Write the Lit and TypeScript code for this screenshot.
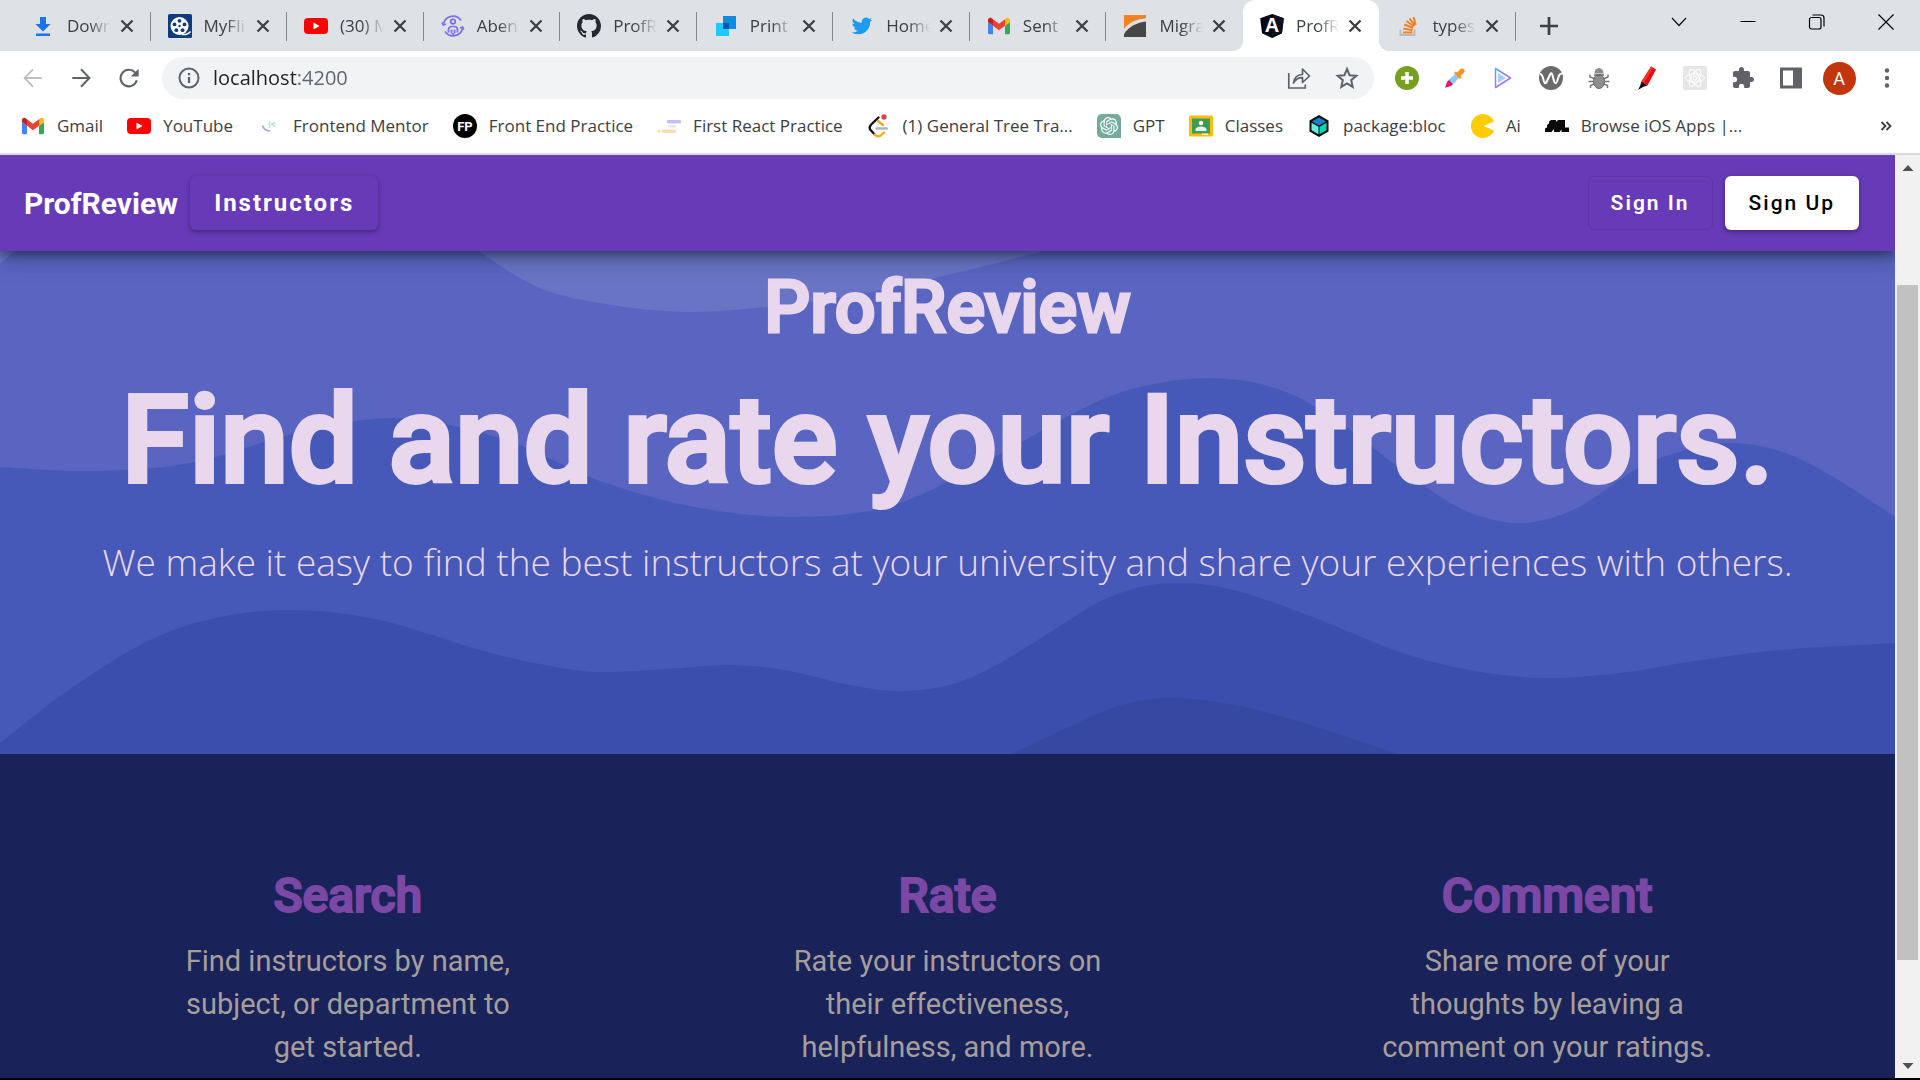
import { LitElement, html, svg, css, nothing } from "lit";
import { customElement, property } from "lit/decorators.js";
import { classMap } from "lit/directives/class-map.js";

type Point = [number, number];

/** Draws a smooth curve through the points (Catmull-Rom turned into cubic segments). */
function curve(points: Point[]): string {
  const n = points.length;
  let d = "";
  for (let i = 0; i < n - 1; i++) {
    const p0 = points[Math.max(0, i - 1)];
    const p1 = points[i];
    const p2 = points[i + 1];
    const p3 = points[Math.min(n - 1, i + 2)];
    const c1 = [p1[0] + (p2[0] - p0[0]) / 6, p1[1] + (p2[1] - p0[1]) / 6];
    const c2 = [p2[0] - (p3[0] - p1[0]) / 6, p2[1] - (p3[1] - p1[1]) / 6];
    d += `C${c1[0].toFixed(1)} ${c1[1].toFixed(1)} ${c2[0].toFixed(1)} ${c2[1].toFixed(1)} ${p2[0]} ${p2[1]}`;
  }
  return d;
}

const crest: Point[] = [[470, -8], [478, 0], [540, 37], [612, 54], [689, 61], [765, 56], [860, 43], [960, 21], [1043, 0], [1070, -8]];
const middle: Point[] = [[0, 216], [92, 220], [190, 212], [290, 184], [392, 167], [500, 187], [600, 230], [700, 257], [796, 266], [890, 255], [980, 214], [1080, 159], [1140, 136], [1211, 127], [1275, 137], [1330, 165], [1400, 217], [1460, 257], [1518, 272], [1575, 258], [1640, 216], [1690, 198], [1731, 192], [1780, 200], [1830, 224], [1895, 266]];
const lower: Point[] = [[0, 492], [70, 438], [150, 389], [220, 366], [294, 359], [380, 369], [480, 399], [540, 413], [597, 421], [665, 418], [732, 414], [790, 420], [850, 434], [906, 440], [965, 429], [1025, 397], [1090, 356], [1130, 339], [1174, 332], [1230, 338], [1310, 365], [1400, 401], [1470, 419], [1542, 427], [1620, 422], [1695, 410], [1780, 399], [1895, 392]];
const base: Point[] = [[1006, 508], [1014, 502], [1082, 470], [1125, 453], [1174, 447], [1240, 455], [1310, 474], [1395, 502], [1408, 508]];

const gmail = svg`<svg viewBox="48 39 96 72">
  <path fill="#4285f4" d="M58 108h14V74L52 59v43c0 3.32 2.69 6 6 6"/><path fill="#34a853" d="M120 108h14c3.32 0 6-2.69 6-6V59l-20 15"/>
  <path fill="#fbbc04" d="M120 48v26l20-15v-8c0-7.42-8.47-11.65-14.4-7.2"/><path fill="#ea4335" d="M72 74V48l24 18 24-18v26L96 92"/>
  <path fill="#c5221f" d="M52 51v8l20 15V48l-5.6-4.2c-5.94-4.45-14.4-.22-14.4 7.2"/></svg>`;
const youtube = svg`<svg viewBox="0 0 24 24"><rect y="4" width="24" height="16" rx="4" fill="#f00"/><path d="M9.5 8.6v6.8l6-3.4z" fill="#fff"/></svg>`;

const icons: Record<string, unknown> = {
  gmail,
  youtube,
  download: svg`<svg viewBox="0 0 24 24"><path d="M9 3h6v7h4.5L12 17.5 4.500 10H9zM5 19.500h14V22H5z" fill="#1a73e8"/></svg>`,
  film: svg`<svg viewBox="0 0 24 24"><rect width="24" height="24" rx="1.500" fill="#0f3c80"/><circle cx="11.500" cy="12" r="9" fill="#fff"/>
    <g fill="#0f3c80"><circle cx="11.500" cy="12" r="1.200"/><circle cx="11.500" cy="6.800" r="1.900"/><circle cx="16.500" cy="10.400" r="1.900"/><circle cx="14.600" cy="16.200" r="1.900"/><circle cx="8.400" cy="16.200" r="1.900"/><circle cx="6.500" cy="10.400" r="1.900"/></g>
    <path d="M14 20.500c3.500.4 6.500-.4 8.500-3" fill="none" stroke="#fff" stroke-width="1.500"/></svg>`,
  people: svg`<svg viewBox="0 0 24 24" fill="none" stroke="#7c6cf0" stroke-width="1.700"><circle cx="12" cy="7.600" r="2.300"/>
    <path d="M7.500 18.500v-2.700a3.300 3.300 0 0 1 3.300-3.300h2.400a3.300 3.300 0 0 1 3.300 3.300v2.700M10.500 19.500v-4M13.500 19.500v-4M2.500 9.500A9.700 9.700 0 0 1 20 6.500M21.500 14.500A9.700 9.700 0 0 1 4 17.500"/>
    <path d="M1 8.500l1.300 2.500 2.500-1M22.800 15.500l-1.300-2.500-2.500 1M12 19v2.500"/></svg>`,
  github: svg`<svg viewBox="0 0 16 16"><path fill="#24292f" d="M8 0C3.58 0 0 3.58 0 8c0 3.540 2.290 6.530 5.470 7.590.4.070.55-.17.55-.38 0-.19-.01-.82-.01-1.490-2.010.37-2.530-.49-2.690-.94-.09-.23-.48-.94-.82-1.130-.28-.15-.68-.52-.01-.53.63-.01 1.080.58 1.230.82.72 1.210 1.870.87 2.330.66.070-.52.28-.87.51-1.070-1.780-.2-3.640-.89-3.640-3.950 0-.87.31-1.590.82-2.150-.08-.2-.36-1.020.08-2.120 0 0 .67-.21 2.200.82.64-.18 1.320-.27 2-.27.68 0 1.360.09 2 .27 1.530-1.040 2.200-.82 2.200-.82.44 1.100.16 1.920.08 2.120.51.56.82 1.270.82 2.150 0 3.070-1.870 3.750-3.650 3.950.29.25.54.73.54 1.480 0 1.070-.01 1.930-.01 2.200 0 .21.15.46.55.38A8.013 8.013 0 0016 8c0-4.420-3.580-8-8-8z"/></svg>`,
  squares: svg`<svg viewBox="0 0 24 24"><rect x="2" y="9" width="13" height="13" fill="#1fc8ff"/><rect x="9" y="2" width="13" height="13" fill="#0d8be0"/><rect x="9" y="9" width="6" height="6" fill="#0b58ad"/></svg>`,
  twitter: svg`<svg viewBox="-2 -1 28 26"><path fill="#1d9bf0" d="M23.953 4.570a10 10 0 01-2.825.775 4.958 4.958 0 002.163-2.723c-.951.555-2.005.959-3.127 1.184a4.920 4.920 0 00-8.384 4.482C7.690 8.095 4.067 6.130 1.640 3.162a4.822 4.822 0 00-.666 2.475c0 1.710.870 3.213 2.188 4.096a4.904 4.904 0 01-2.228-.616v.060a4.923 4.923 0 003.946 4.827 4.996 4.996 0 01-2.212.085 4.936 4.936 0 004.604 3.417 9.867 9.867 0 01-6.102 2.105c-.390 0-.779-.023-1.170-.067a13.995 13.995 0 007.557 2.209c9.053 0 13.998-7.496 13.998-13.985 0-.210 0-.420-.015-.630A9.935 9.935 0 0024 4.590z"/></svg>`,
  road: svg`<svg viewBox="0 0 24 24"><path d="M1 1h22v3.500C14 5 6 8 1 15z" fill="#f58220"/><path d="M1 23v-3C6 12.500 14 8.500 23 7.500V23z" fill="#464646"/></svg>`,
  angular: svg`<svg viewBox="0 0 24 24"><path d="M12 0l11.800 4.200-1.800 15L12 24 2 19.200.2 4.200z" fill="#05060f"/><path d="M12 0l11.800 4.200-1.800 15L12 24z" fill="#0d1020"/><text x="12" y="18.300" text-anchor="middle" font-family="Liberation Sans, sans-serif" font-weight="700" font-size="20" fill="#fff">A</text></svg>`,
  stack: svg`<svg viewBox="0 0 24 24" fill="none" stroke-width="2"><path d="M4.500 15.500V21h14v-5.500" stroke="#bcbbbb"/><path d="M7 18.500h9.500M7.200 14.600l9.300 1.700M8.300 10.500l8.700 3.500M10.500 7l7.300 5.500M13.500 4.500l5.500 7.200M17.500 3l2.200 8" stroke="#f48024"/></svg>`,
  mentor: svg`<svg viewBox="0 0 24 24" fill="none" stroke-width="1.700"><path d="M5.500 11.500c1 3.500 3.500 5.300 7.500 5.300" stroke="#a3aadb"/><path d="M12.500 7v7M18 8.500l-3 1.800 3 2" stroke="#b5e3e3"/></svg>`,
  fp: svg`<svg viewBox="0 0 24 24"><circle cx="12" cy="12" r="12"/><text x="12" y="16.500" text-anchor="middle" font-family="Roboto, sans-serif" font-weight="700" font-size="13" fill="#fff">FP</text></svg>`,
  bars: svg`<svg viewBox="0 0 24 24"><rect x="10" y="6" width="14" height="3.500" rx="1" fill="#c9bbfb"/><rect x="11" y="11" width="8" height="2.500" rx="1" fill="#dcece3"/><rect x="5" y="15.500" width="14" height="3.500" rx="1" fill="#fddcae"/><circle cx="2" cy="17.200" r="1.600" fill="#fddcae"/></svg>`,
  leet: svg`<svg viewBox="0 0 24 24" fill="none" stroke-width="2.300" stroke-linecap="round"><path d="M11.500 3.500L4.200 10.500c-1.800 1.900-1.800 4.500 0 6.300l3.300 3.500" stroke="#111"/><path d="M7.500 20.500c2.500 2.500 5 2.500 7.500 0l2-2M11 7l5 4" stroke="#f5a623"/><path d="M9.500 14.500H20" stroke="#b5b5b5"/><circle cx="17" cy="3" r="2.700" fill="#d64545" stroke="none"/></svg>`,
  gpt: svg`<svg viewBox="0 0 24 24"><path d="M5 0h14a5 5 0 0 1 5 5v19H5a5 5 0 0 1-5-5V5a5 5 0 0 1 5-5z" fill="#74aa9c"/><g transform="translate(3 3) scale(.75)"><path fill="#fff" d="M22.282 9.821a5.985 5.985 0 0 0-.516-4.911 6.046 6.046 0 0 0-6.510-2.900A6.065 6.065 0 0 0 4.981 4.182a5.985 5.985 0 0 0-3.998 2.900 6.046 6.046 0 0 0 .743 7.097 5.980 5.980 0 0 0 .511 4.911 6.051 6.051 0 0 0 6.515 2.900A5.985 5.985 0 0 0 13.260 24a6.056 6.056 0 0 0 5.772-4.206 5.989 5.989 0 0 0 3.998-2.900 6.056 6.056 0 0 0-.748-7.073zm-9.022 12.608a4.476 4.476 0 0 1-2.876-1.041l.142-.080 4.778-2.758a.795.795 0 0 0 .393-.681v-6.737l2.020 1.169a.071.071 0 0 1 .038.052v5.583a4.504 4.504 0 0 1-4.495 4.494zm-9.661-4.125a4.471 4.471 0 0 1-.535-3.014l.142.085 4.783 2.758a.771.771 0 0 0 .781 0l5.843-3.369v2.332a.080.080 0 0 1-.033.062L9.740 19.950a4.499 4.499 0 0 1-6.141-1.646zM2.341 7.896a4.485 4.485 0 0 1 2.366-1.973V11.600a.766.766 0 0 0 .388.677l5.814 3.354-2.020 1.169a.076.076 0 0 1-.071 0l-4.830-2.787A4.504 4.504 0 0 1 2.341 7.872zm16.596 3.856L13.104 8.364 15.119 7.200a.076.076 0 0 1 .071 0l4.830 2.791a4.494 4.494 0 0 1-.677 8.104v-5.677a.790.790 0 0 0-.407-.667zm2.011-3.023l-.142-.085-4.774-2.782a.776.776 0 0 0-.785 0L9.409 9.230V6.897a.066.066 0 0 1 .028-.062l4.830-2.787a4.499 4.499 0 0 1 6.680 4.660zM8.307 12.863l-2.020-1.164a.080.080 0 0 1-.038-.057V6.074a4.499 4.499 0 0 1 7.376-3.454l-.142.081L8.704 5.459a.795.795 0 0 0-.393.681zm1.098-2.365l2.602-1.500 2.607 1.500v2.999l-2.597 1.500-2.607-1.500z"/></g></svg>`,
  classes: svg`<svg viewBox="0 0 24 24"><rect y="1.500" width="24" height="21" rx="1.500" fill="#f8bc0c"/><rect x="3" y="4.500" width="18" height="15" fill="#3f9b55"/><circle cx="12" cy="9" r="2.200" fill="#fff"/><path d="M6.500 17v-1.500c0-2 3-3 5.500-3s5.500 1 5.500 3V17z" fill="#e5f3e8"/><path d="M13 19.500h6v1.500h-6z" fill="#fff3c4"/></svg>`,
  bloc: svg`<svg viewBox="0 0 24 24"><path d="M12 1l9.500 5.500v11L12 23l-9.500-5.500v-11z" fill="#0a0f12"/><path d="M12 3.500l7 4-7 4-7-4z" fill="#1583c8"/><path d="M4.500 8.700l7 4v7.600l-7-4z" fill="#63f0dc"/><path d="M19.500 8.700l-7 4v7.600l7-4z" fill="#06d6b4"/></svg>`,
  pac: svg`<svg viewBox="0 0 24 24"><path d="M24 7.500A12 12 0 1 0 24 16.500L13.500 12z" fill="#fc0"/></svg>`,
  mobbin: svg`<svg viewBox="0 0 24 24"><path d="M0 18v-3.500L2 13.500V11l2-1.500V7.500l2-1.500h5v2l2-2h7v7.500h4V18h-7.500v-2.500L14.500 18H9v-3L6.500 18z" fill="#0a0a0a"/></svg>`,

  back: svg`<svg viewBox="0 0 24 24" fill="none" stroke="#bdbfc2" stroke-width="2"><path d="M21.500 12H3M12 2.500L2.800 12l9.200 9.500"/></svg>`,
  forward: svg`<svg viewBox="0 0 24 24" fill="none" stroke="#5f6368" stroke-width="2.200"><path d="M2.500 12H21M12 2.500l9.200 9.500-9.200 9.500"/></svg>`,
  reload: svg`<svg viewBox="0 0 24 24"><path d="M20.500 14.500A9 9 0 1 1 18.500 6" fill="none" stroke="#5f6368" stroke-width="2.300"/><path d="M22.500 2v8.300H14z" fill="#5f6368"/></svg>`,
  info: svg`<svg viewBox="0 0 24 24" fill="none" stroke="#5f6368" stroke-width="2"><circle cx="12" cy="12" r="9.500"/><path d="M12 11v6M12 7v2.200" stroke-width="2.200"/></svg>`,
  share: svg`<svg viewBox="0 0 24 24" fill="none" stroke="#5f6368" stroke-width="1.700" stroke-linejoin="round"><path d="M1.800 7v15h16.500v-3.500M6.500 17c.7-5.500 4-8.300 9-8.500V3l7 7-7 6.500v-4.800C11.500 11.500 8.500 13.500 6.500 17z"/></svg>`,
  star: svg`<svg viewBox="0 0 24 24"><path d="M12 3l2.600 6.200 6.700.6-5.100 4.400 1.500 6.600L12 17.300l-5.700 3.500 1.500-6.600-5.100-4.400 6.700-.6z" fill="none" stroke="#5f6368" stroke-width="2"/></svg>`,
  add: svg`<svg viewBox="0 0 24 24"><circle cx="12" cy="12" r="12" fill="#76a020"/><path d="M12 6v12M6 12h12" stroke="#fff" stroke-width="3.500"/></svg>`,
  picker: svg`<svg viewBox="0 0 24 24"><path d="M12.500 7.500l4 4L8 20l-4-4z" fill="#8ecbf2"/><path d="M6.500 13.500L4 16l-2 5.800L8 20l2-2z" fill="#e5156f"/><path d="M9 11l4 5-3 2-4-4z" fill="#8ecbf2"/><path d="M11 7l6 6 1.500-1.500L17.500 10l3.500-3.500c2-2-1-5.500-3.500-3.500L14 6.500l-1.500-1z" fill="#f9921b"/></svg>`,
  play: svg`<svg viewBox="0 0 24 24"><defs><linearGradient id="playTone" x1="0" y1="0" x2="1" y2="1"><stop offset="0" stop-color="#5aa7f5"/><stop offset="1" stop-color="#c45af5"/></linearGradient></defs><path d="M4.500 2.500L19.500 12l-15 9.500z" fill="#fff" stroke="url(#playTone)" stroke-width="1.500" stroke-linejoin="round"/><path d="M7 7l8 5-8 5z" fill="#a9cdf8"/></svg>`,
  wave: svg`<svg viewBox="0 0 24 24"><circle cx="12" cy="12" r="12" fill="#6b6b6b"/><path d="M1 8c2 0 2.500 1.500 3.300 5 .8 4.500 2.200 5.500 3.500 2.500L11 8.500c.8-1.800 1.800-1.500 2.400.5l1.600 6c.8 3 2 3 3 .5L20 9.500c.6-1.500 1.500-2 3-2" fill="none" stroke="#fff" stroke-width="2"/></svg>`,
  bug: svg`<svg viewBox="0 0 24 24"><g fill="none" stroke="#777" stroke-width="1.500"><path d="M7 12.500L3 11V8.500M17 12.500l4-1.500V8.500M6 15.500H1.500M18 15.500h4.500M7 18l-3.500 1.500V22M17 18l3.500 1.500V22"/></g><path d="M7.500 7.500a4.500 5.500 0 0 1 9 0z" fill="#8b8b8b"/><ellipse cx="12" cy="15.500" rx="5.500" ry="7" fill="#8e8e8e" stroke="#666"/><path d="M7 9h10" stroke="#666" stroke-width="1.500"/></svg>`,
  marker: svg`<svg viewBox="0 0 24 24"><path d="M16 .5l5 3-8.500 16-6-4z" fill="#e60d0d"/><path d="M16 .5l2 1-9 15.500-2.500-1.500z" fill="#f93232"/><path d="M6.500 15.500l6 4L8 21l-5 3 2-4z" fill="#111"/></svg>`,
  react: svg`<svg viewBox="0 0 24 24"><rect width="24" height="24" rx="2" fill="#e6e6e6"/><g fill="none" stroke="#fff"><ellipse cx="12" cy="12" rx="9.500" ry="4"/><ellipse cx="12" cy="12" rx="9.500" ry="4" transform="rotate(60 12 12)"/><ellipse cx="12" cy="12" rx="9.500" ry="4" transform="rotate(120 12 12)"/><circle cx="12" cy="12" r="2"/></g></svg>`,
  puzzle: svg`<svg viewBox="0 0 24 24"><path fill="#5f6368" d="M20.500 11H19V7c0-1.100-.9-2-2-2h-4V3.500C13 2.120 11.880 1 10.500 1S8 2.120 8 3.500V5H4c-1.100 0-1.990.9-1.990 2v3.800H3.500c1.490 0 2.700 1.210 2.700 2.700s-1.210 2.700-2.700 2.700H2V20c0 1.100.9 2 2 2h3.800v-1.500c0-1.490 1.210-2.700 2.700-2.700 1.490 0 2.700 1.210 2.700 2.700V22H17c1.100 0 2-.9 2-2v-4h1.500c1.380 0 2.500-1.120 2.500-2.500S21.880 11 20.500 11z"/></svg>`,
  panel: svg`<svg viewBox="0 0 24 24"><path fill="#5f6368" fill-rule="evenodd" d="M1 1.500h22v21H1zM4 4.500v15h10v-15z"/></svg>`,
  dots: svg`<svg viewBox="0 0 24 24" fill="#5f6368"><circle cx="12" cy="4.500" r="2.200"/><circle cx="12" cy="12" r="2.200"/><circle cx="12" cy="19.500" r="2.200"/></svg>`,
  close: svg`<svg viewBox="0 0 24 24"><path d="M6.500 6.500l11 11M17.500 6.500l-11 11" stroke="#3c4043" stroke-width="2.300"/></svg>`,
  plus: svg`<svg viewBox="0 0 24 24"><path d="M12 3v18M3 12h18" stroke="#3c4043" stroke-width="2.700"/></svg>`,
  chevron: svg`<svg viewBox="0 0 24 24"><path d="M5 8l7 7.500L19 8" fill="none" stroke="#111" stroke-width="1.200"/></svg>`,
  minimize: svg`<svg viewBox="0 0 24 24"><path d="M4.500 11.500h15" stroke="#000"/></svg>`,
  restore: svg`<svg viewBox="0 0 24 24" fill="none" stroke="#000" stroke-width="1.200"><rect x="4.500" y="7.500" width="11.500" height="11.500" rx="2"/><path d="M7.500 5h8.500a3 3 0 0 1 3 3v8.500"/></svg>`,
  quit: svg`<svg viewBox="0 0 24 24"><path d="M4.500 4.500l15 15M19.500 4.500l-15 15" stroke="#000" stroke-width="1.200"/></svg>`,
  more: svg`<svg viewBox="0 0 24 24" fill="none" stroke="#3c4043" stroke-width="1.800"><path d="M7.500 8l4 4-4 4M12.500 8l4 4-4 4"/></svg>`,
  up: svg`<svg viewBox="0 0 24 24"><path d="M12 9l5.500 6h-11z" fill="#505050"/></svg>`,
  down: svg`<svg viewBox="0 0 24 24"><path d="M12 15l5.500-6h-11z" fill="#505050"/></svg>`,
};

@customElement("ui-icon")
class UiIcon extends LitElement {
  @property() name = "";
  static styles = css`
    :host { display: block; flex: none; width: 24px; height: 24px; }
    svg { display: block; width: 100%; height: 100%; }
  `;
  render() {
    return html`${icons[this.name] ?? nothing}`;
  }
}

const tabs = [
  ["download", "Down"], ["film", "MyFli"], ["youtube", "(30) M"], ["people", "Aben"], ["github", "ProfR"], ["squares", "Print"],
  ["twitter", "Home"], ["gmail", "Sent"], ["road", "Migra"], ["angular", "ProfR"], ["stack", "types"],
];
const activeTab = 9;
const bookmarks = [
  ["gmail", "Gmail"], ["youtube", "YouTube"], ["mentor", "Frontend Mentor"], ["fp", "Front End Practice"], ["bars", "First React Practice"],
  ["leet", "(1) General Tree Tra..."], ["gpt", "GPT"], ["classes", "Classes"], ["bloc", "package:bloc"], ["pac", "Ai"], ["mobbin", "Browse iOS Apps |..."],
];
const extensions = [
  ["add", "Add"], ["picker", "Color picker"], ["play", "Player"], ["wave", "Wave"], ["bug", "Debugger"], ["marker", "Marker"],
  ["react", "React"], ["puzzle", "Extensions"], ["panel", "Side panel"],
];

@customElement("browser-chrome")
class BrowserChrome extends LitElement {
  static styles = css`
    :host { display: block; background: #fff; border-bottom: 2px solid #dadada; color: #3c4043; font: 17px/24px "Open Sans", "Noto Sans", sans-serif; }
    button { display: grid; place-items: center; padding: 0; border: 0; background: none; color: inherit; font: inherit; }
    .strip { display: flex; height: 51px; padding-left: 14px; background: #dee1e6; }
    .tabs { display: flex; flex: 1; max-width: 1502px; }
    .tab { display: flex; flex: 1; align-items: center; min-width: 0; padding: 0 12px 0 17px; position: relative; }
    .tab::after { content: ""; position: absolute; right: 0; top: 12px; width: 1px; height: 29px; background: #85888d; }
    .title { flex: 1; margin: 0 4px 0 12px; overflow: hidden; white-space: nowrap; mask-image: linear-gradient(90deg, #000 50%, transparent); }
    .tab.active { background: #fff; border-radius: 12px 12px 0 0; }
    .tab.active::after, .tab.active::before { content: ""; position: absolute; top: auto; bottom: 0; width: 10px; height: 10px; }
    .tab.active::before { left: -10px; background: radial-gradient(circle at 0 0, transparent 10px, #fff 10px); }
    .tab.active::after { right: -10px; background: radial-gradient(circle at 100% 0, transparent 10px, #fff 10px); }
    .tab.before::after { display: none; }
    .new { width: 66px; }
    .window { display: flex; margin-left: auto; height: 43px; }
    .window button { width: 69px; }
    .toolbar { display: flex; align-items: center; padding: 6px 9px; }
    .tool { width: 48px; height: 42px; }
    .nav, .ext { display: flex; }
    .nav ui-icon { width: 22px; height: 22px; }
    .omni { display: flex; flex: 1; align-items: center; height: 42px; margin: 0 9px; padding: 0 3px 0 15px; border-radius: 21px; background: #f1f3f4; }
    .address { flex: 1; margin-left: 12px; padding: 0; border: 0; outline: 0; font: 20px/28px "Open Sans", "Noto Sans", sans-serif; background: linear-gradient(90deg, #202124 84px, #5f6368 84px); background-clip: text; -webkit-background-clip: text; -webkit-text-fill-color: transparent; }
    .avatar { width: 33px; height: 33px; border-radius: 50%; background: #c2360c; color: #fff; font: 18px/33px Roboto, sans-serif; text-align: center; }
    .marks { display: flex; align-items: center; height: 42px; padding: 0 22px 6px 21px; gap: 24px; }
    .mark { display: flex; align-items: center; gap: 12px; color: inherit; text-decoration: none; white-space: nowrap; }
    .more { margin-left: auto; }
  `;
  render() {
    return html`
      <div class="strip">
        <div class="tabs">
          ${tabs.map(([icon, title], i) => html`
            <div class=${classMap({ tab: true, active: i === activeTab, before: i === activeTab - 1 })}>
              <ui-icon name=${icon}></ui-icon><span class="title">${title}</span>
              <button aria-label="Close tab"><ui-icon name="close"></ui-icon></button>
            </div>`)}
        </div>
        <button class="new" aria-label="New tab"><ui-icon name="plus"></ui-icon></button>
        <div class="window">
          <button aria-label="Search tabs"><ui-icon name="chevron"></ui-icon></button>
          <button aria-label="Minimize"><ui-icon name="minimize"></ui-icon></button>
          <button aria-label="Restore"><ui-icon name="restore"></ui-icon></button>
          <button aria-label="Close window"><ui-icon name="quit"></ui-icon></button>
        </div>
      </div>
      <div class="toolbar">
        <div class="nav">
          <button class="tool" aria-label="Back"><ui-icon name="back"></ui-icon></button>
          <button class="tool" aria-label="Forward"><ui-icon name="forward"></ui-icon></button>
          <button class="tool" aria-label="Reload"><ui-icon name="reload"></ui-icon></button>
        </div>
        <div class="omni">
          <ui-icon name="info"></ui-icon>
          <input class="address" aria-label="Address" .value=${"localhost:4200"} />
          <button class="tool" aria-label="Share"><ui-icon name="share"></ui-icon></button>
          <button class="tool" aria-label="Bookmark"><ui-icon name="star"></ui-icon></button>
        </div>
        <div class="ext">
          ${extensions.map(([icon, label]) => html`<button class="tool" aria-label=${label}><ui-icon name=${icon}></ui-icon></button>`)}
          <button class="tool" aria-label="Profile"><span class="avatar">A</span></button>
          <button class="tool" aria-label="Menu"><ui-icon name="dots"></ui-icon></button>
        </div>
      </div>
      <nav class="marks">
        ${bookmarks.map(([icon, label]) => html`<a class="mark" href="#"><ui-icon name=${icon}></ui-icon>${label}</a>`)}
        <button class="more" aria-label="More bookmarks"><ui-icon name="more"></ui-icon></button>
      </nav>
    `;
  }
}

@customElement("page-scrollbar")
class PageScrollbar extends LitElement {
  static styles = css`
    :host { display: flex; flex-direction: column; width: 25px; background: #f1f1f1; }
    button { display: grid; place-items: center; height: 25px; padding: 0; border: 0; background: none; }
    .lead { flex: 105; }
    .thumb { flex: 675; margin: 0 2px; background: #c1c1c1; }
    .tail { flex: 93; }
  `;
  render() {
    return html`
      <button aria-label="Scroll up"><ui-icon name="up"></ui-icon></button>
      <div class="lead"></div><div class="thumb"></div><div class="tail"></div>
      <button aria-label="Scroll down"><ui-icon name="down"></ui-icon></button>
    `;
  }
}

const features = [
  ["Search", "Find instructors by name, subject, or department to get started."],
  ["Rate", "Rate your instructors on their effectiveness, helpfulness, and more."],
  ["Comment", "Share more of your thoughts by leaving a comment on your ratings."],
];

@customElement("app-root")
class AppRoot extends LitElement {
  static styles = css`
    :host { display: flex; flex-direction: column; height: 100vh; overflow: hidden; box-sizing: border-box; border-bottom: 2px solid #000; font-family: Roboto, sans-serif; }
    .view { display: flex; flex: 1; min-height: 0; }
    .page { display: flex; flex: 1; flex-direction: column; min-width: 0; overflow: hidden; }
    page-scrollbar { flex: none; }
    .bar { display: flex; align-items: center; flex: none; gap: 12px; height: 96px; padding: 0 36px 0 24px; background: #673ab7; color: #fff; z-index: 1; position: relative; box-shadow: 0 4px 10px rgba(0, 0, 0, .4), 0 8px 24px rgba(0, 0, 0, .2); }
    .brand { color: inherit; font-size: 30px; font-weight: 700; text-decoration: none; }
    .btn { box-sizing: border-box; height: 54px; padding: 0 24px; border: 0; border-radius: 6px; background: #673ab7; color: #fff; font: 500 21px/32px Roboto, sans-serif; letter-spacing: 2px; }
    .raised { box-shadow: 0 2px 5px rgba(0, 0, 0, .35); }
    .large { font-size: 24px; font-weight: 700; }
    .outlined { margin-left: auto; border: 1px solid #5f34a8; padding: 0 22px; font-weight: 600; }
    .light { background: #fff; color: #000; }
    .hero { position: relative; flex: none; box-sizing: border-box; display: flex; flex-direction: column; align-items: center; padding: 17px 0 168px; background: #5965c0; color: #e9d7ee; text-align: center; }
    .waves { position: absolute; inset: 0; width: 100%; height: 100%; }
    .name, .lead, .sub { position: relative; margin: 0; white-space: nowrap; }
    .name { font-size: 72px; line-height: 80px; font-weight: 500; -webkit-text-stroke: 3px #e9d7ee; }
    .lead { margin-top: 28px; font-size: 123px; line-height: 128px; font-weight: 500; -webkit-text-stroke: 4px #e9d7ee; }
    .sub { margin-top: 34px; font: 300 37px/48px "Open Sans", sans-serif; }
    .features { display: grid; grid-template-columns: repeat(3, 1fr); flex: 1; padding: 118px 48px 0; background: #19235a; text-align: center; }
    .feature { display: flex; flex-direction: column; align-items: center; gap: 20px; }
    .feature h2 { margin: 0; color: #7b48a5; font-size: 48px; line-height: 48px; font-weight: 500; -webkit-text-stroke: 2px #7b48a5; }
    .feature p { margin: 0; max-width: 350px; color: #a69e9b; font-size: 29px; line-height: 43px; }
  `;
  render() {
    return html`
      <browser-chrome></browser-chrome>
      <div class="view">
        <div class="page">
          <header class="bar">
            <a class="brand" href="#">ProfReview</a>
            <button class="btn raised large">Instructors</button>
            <button class="btn outlined">Sign In</button>
            <button class="btn raised light">Sign Up</button>
          </header>
          <section class="hero">
            <svg class="waves" viewBox="0 0 1895 503" preserveAspectRatio="none" aria-hidden="true">
              <path d="M0 0H15L0 13Z" fill="#6974c5"></path>
              <path d="M470 -8${curve(crest)}Z" fill="#6974c5"></path>
              <path d="M0 216${curve(middle)}V503H0Z" fill="#4759b8"></path>
              <path d="M0 492${curve(lower)}V503H0Z" fill="#3b4eae"></path>
              <path d="M1006 508${curve(base)}Z" fill="#3748a0"></path>
            </svg>
            <h2 class="name">ProfReview</h2>
            <h1 class="lead">Find and rate your Instructors.</h1>
            <p class="sub">We make it easy to find the best instructors at your university and share your experiences with others.</p>
          </section>
          <section class="features">
            ${features.map(([title, text]) => html`<article class="feature"><h2>${title}</h2><p>${text}</p></article>`)}
          </section>
        </div>
        <page-scrollbar></page-scrollbar>
      </div>
    `;
  }
}
